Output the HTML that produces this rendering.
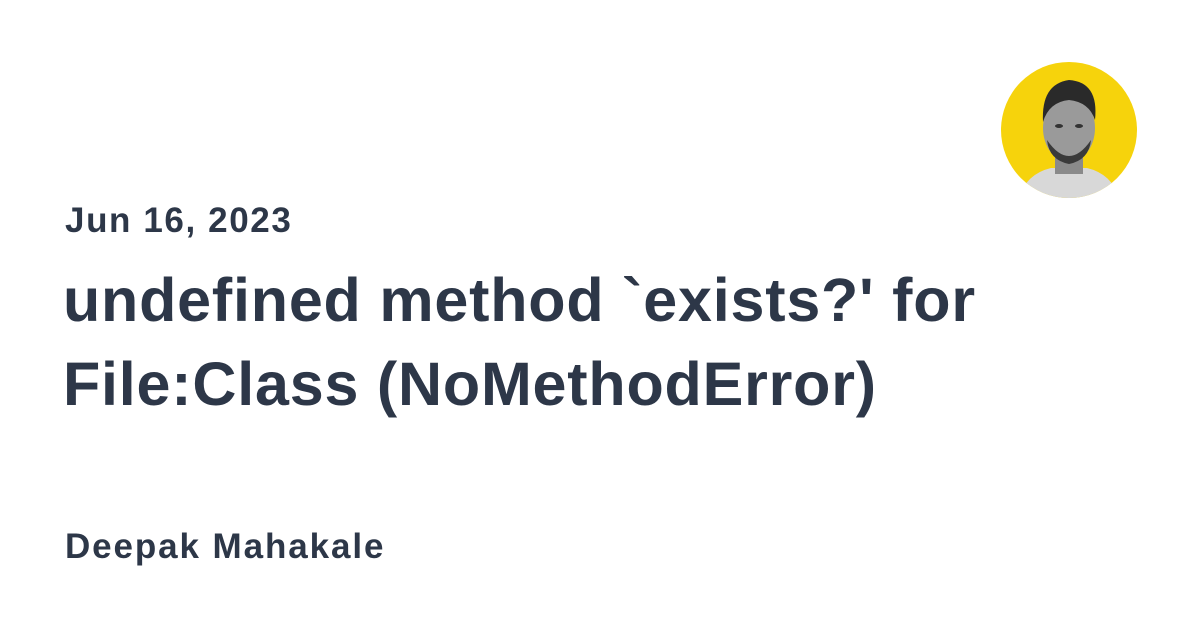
<!DOCTYPE html>
<html><head><meta charset="utf-8"><style>
html,body{margin:0;padding:0;background:#fff;width:1200px;height:630px;overflow:hidden}
body{font-family:"Liberation Sans",sans-serif;color:#2d3748;position:relative}
.date{position:absolute;left:65px;top:201px;font-size:35px;font-weight:bold;letter-spacing:1.6px;line-height:40px}
.title{position:absolute;left:63px;top:258px;font-size:61px;font-weight:bold;line-height:84px;letter-spacing:0.8px}
.name{position:absolute;left:65px;top:527px;font-size:35px;font-weight:bold;letter-spacing:1.9px;line-height:40px}
.av{position:absolute;left:1001px;top:62px;width:136px;height:136px;border-radius:50%;background:#f6d30c;overflow:hidden}
</style></head><body>
<div class="av"><svg width="136" height="136" viewBox="0 0 136 136">
<path d="M18 136 Q25 112 50 106 L86 106 Q111 112 118 136Z" fill="#d8d8d8"/>
<rect x="54" y="90" width="28" height="22" fill="#8a8a8a"/>
<ellipse cx="68" cy="66" rx="26" ry="34" fill="#9a9a9a"/>
<path d="M42 60 Q40 22 68 18 Q98 20 94 58 Q88 40 68 38 Q48 40 42 60Z" fill="#2a2a2a"/>
<path d="M46 78 Q68 110 90 78 Q88 98 68 102 Q48 98 46 78Z" fill="#3a3a3a"/>
<ellipse cx="58" cy="64" rx="4" ry="2" fill="#333"/><ellipse cx="78" cy="64" rx="4" ry="2" fill="#333"/>
</svg></div>
<div class="date">Jun 16, 2023</div>
<div class="title">undefined method `exists?' for<br>File:Class (NoMethodError)</div>
<div class="name">Deepak Mahakale</div>
</body></html>
